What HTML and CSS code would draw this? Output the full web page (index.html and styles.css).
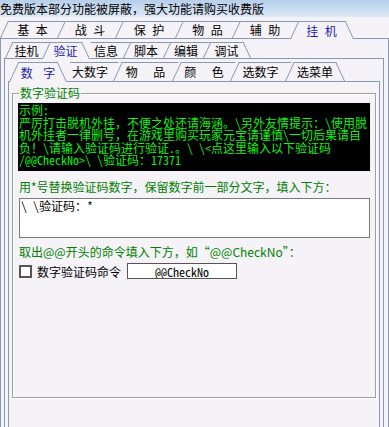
FILE: index.html
```html
<!DOCTYPE html>
<html lang="zh-CN">

<head>
    <meta charset="UTF-8">
    <meta name="viewport" content="width=device-width, initial-scale=1.0">
    <title>挂机 - 验证</title>
    <link rel="stylesheet" href="styles.css">
</head>

<body>
    <div class="notice">免费版本部分功能被屏蔽，强大功能请购买收费版</div>

    <div class="tabs row1">
        <div class="tab">基 本</div>
        <div class="tab">战 斗</div>
        <div class="tab">保 护</div>
        <div class="tab">物 品</div>
        <div class="tab">辅 助</div>
        <div class="tab on last">挂 机</div>
    </div>
    <div class="panel p1">

        <div class="tabs row2">
            <div class="tab">挂机</div>
            <div class="tab on">验证</div>
            <div class="tab">信息</div>
            <div class="tab">脚本</div>
            <div class="tab">编辑</div>
            <div class="tab last">调试</div>
        </div>
        <div class="panel p2">

            <div class="tabs row3">
                <div class="tab on">数 字</div>
                <div class="tab">大数字</div>
                <div class="tab wide">物 品</div>
                <div class="tab wide">颜 色</div>
                <div class="tab">选数字</div>
                <div class="tab last">选菜单</div>
            </div>
            <div class="panel p3">

                <fieldset class="group">
                    <legend>数字验证码</legend>

                    <div class="sample">
                        <div>示例:</div>
                        <div>严厉打击脱机外挂，不便之处还请海涵。\另外友情提示：\使用脱</div>
                        <div>机外挂者一律删号，在游戏里购买玩家元宝请谨慎\一切后果请自</div>
                        <div>负！\请输入验证码进行验证.。\ \&lt;点这里输入以下验证码</div>
                        <div>/@@CheckNo&gt;\ \验证码：17371</div>
                    </div>

                    <p class="hint first">用*号替换验证码数字，保留数字前一部分文字，填入下方：</p>
                    <textarea class="answer">\ \验证码：*</textarea>

                    <p class="hint">取出@@开头的命令填入下方，如“@@CheckNo”：</p>
                    <div class="cmd">
                        <label class="check"><input type="checkbox">数字验证码命令</label>
                        <input type="text" class="cmdbox" value="@@CheckNo">
                    </div>
                </fieldset>

            </div>
        </div>
    </div>
</body>

</html>
```

FILE: styles.css
```css
* {
    margin: 0;
    padding: 0;
    box-sizing: border-box;
}

body {
    width: 389px;
    height: 427px;
    overflow: hidden;
    display: flex;
    flex-direction: column;
    background-color: #f5f3f7;
    font-family: "Noto Sans CJK SC", sans-serif;
    font-size: 12px;
    color: #000;
}

.notice {
    height: 17px;
    line-height: 17px;
    white-space: nowrap;
    background: linear-gradient(#b7cfeb, #dde9f6);
}

/* tab strips */
.tabs {
    display: flex;
    position: relative;
    z-index: 1;
    flex-shrink: 0;
}

.row1 {
    height: 17px;
    margin-top: 4px;
}

.row2 {
    height: 16px;
    padding-left: 1px;
}

.row3 {
    height: 19px;
    padding-left: 1px;
}

.tab {
    position: relative;
    z-index: 1;
    display: flex;
    align-items: center;
    justify-content: center;
    white-space: nowrap;
    word-spacing: 4px;
}

.tab+.tab {
    margin-left: -8px;
}

.row2 .tab+.tab,
.row3 .tab+.tab {
    margin-left: -6px;
}

.tab::before,
.tab::after {
    content: "";
    position: absolute;
    top: 0;
    bottom: 0;
    width: 50%;
    border-top: 1px solid #8a97ad;
    background-color: #f5f3f7;
    z-index: -1;
}

.tab::before {
    left: 0;
    border-left: 1px solid #8a97ad;
    transform: skewX(-25deg);
    transform-origin: left bottom;
}

.tab::after {
    right: 0;
    transform: skewX(25deg);
    transform-origin: right bottom;
}

.tab:not(.on):not(.last)::after {
    right: -8px;
}

.tab.on::after,
.tab.last::after {
    border-right: 1px solid #8a97ad;
}

.on+.tab::before {
    border-left-color: transparent;
}

.tab.on {
    z-index: 2;
    align-self: flex-start;
    height: calc(100% + 1px);
    color: #1b1ba8;
}

.row1 .tab:nth-child(1) { width: 65px; }
.row1 .tab:nth-child(2) { width: 66px; }
.row1 .tab:nth-child(3) { width: 68px; }
.row1 .tab:nth-child(4) { width: 65px; }
.row1 .tab:nth-child(5) { width: 66px; }
.row1 .tab:nth-child(6) { width: 63px; }

.row2 .tab:nth-child(1) { width: 43px; }
.row2 .tab:nth-child(2) { width: 47px; }
.row2 .tab:nth-child(3) { width: 46px; }
.row2 .tab:nth-child(4) { width: 46px; }
.row2 .tab:nth-child(5) { width: 46px; }
.row2 .tab:nth-child(6) { width: 47px; }

.row3 .tab:nth-child(1) { width: 58px; word-spacing: 8px; }
.row3 .tab:nth-child(2) { width: 58px; }
.row3 .tab:nth-child(3) { width: 65px; }
.row3 .tab:nth-child(4) { width: 64px; }
.row3 .tab:nth-child(5) { width: 61px; }
.row3 .tab:nth-child(6) { width: 60px; }

.row3 .wide {
    word-spacing: 13px;
}

/* nested panels */
.panel {
    flex: 1;
    display: flex;
    flex-direction: column;
    border: 1px solid #8a97ad;
    border-bottom: none;
}

.p1 {
    padding: 3px 4px 0 3px;
}

.p2 {
    padding: 3px 3px 0 3px;
}

.p3 {
    padding: 5px 3px 0 3px;
}

/* group box */
.group {
    border: 1px solid #a0a0a0;
    box-shadow: inset 1px 1px 0 #fff, 1px 1px 0 #fff;
    padding: 4px 5px 118px 6px;
}

.group legend {
    padding: 0 1px;
    line-height: 12px;
    color: #008000;
}

.sample {
    height: 68px;
    margin-left: -1px;
    padding: 1px 0 0 1px;
    background-color: #000;
    color: #14f014;
    font-family: "Noto Sans Mono CJK SC", "Noto Sans CJK SC", monospace;
    line-height: 12.5px;
}

.sample div {
    white-space: pre;
}

.hint {
    margin-top: 7px;
    line-height: 14px;
    color: #008000;
    white-space: nowrap;
}

.hint.first {
    margin-top: 9px;
}

.answer {
    display: block;
    width: 100%;
    height: 40px;
    margin-top: 4px;
    padding: 1px;
    border: 1px solid #7a7a7a;
    background-color: #fff;
    resize: none;
    font-family: "Noto Sans Mono CJK SC", "Noto Sans CJK SC", monospace;
    font-size: 12px;
    line-height: 12px;
    color: #000;
}

.cmd {
    display: flex;
    align-items: center;
    height: 16px;
    margin-top: 4px;
}

.check {
    display: flex;
    align-items: center;
    gap: 5px;
    font-size: 12px;
}

.check input {
    appearance: none;
    width: 13px;
    height: 13px;
    border: 2px solid #555;
    background-color: #fff;
}

.cmdbox {
    width: 110px;
    height: 16px;
    margin-left: 6px;
    border: 1px solid #555;
    background-color: #fff;
    text-align: center;
    font-family: "Noto Sans Mono CJK SC", "Noto Sans CJK SC", monospace;
    font-size: 12px;
    color: #000;
}
```
